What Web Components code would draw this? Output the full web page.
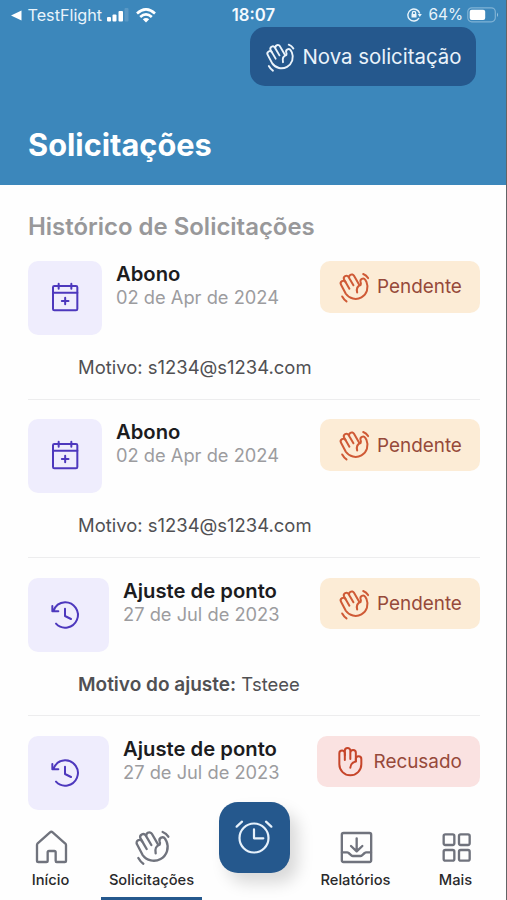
<!DOCTYPE html>
<html lang="pt-BR">
<head>
<meta charset="utf-8">
<title>Solicitações</title>
<style>
html,body{margin:0;height:100%;overflow:hidden;background:#fefefe}
body{font-family:Inter,"Liberation Sans",sans-serif;-webkit-font-smoothing:antialiased}
</style>
</head>
<body>
<app-screen></app-screen>
<script>
const define = (name, css, html) => customElements.define(name, class extends HTMLElement {
  connectedCallback() {
    if (this.shadowRoot) return;
    this.attachShadow({mode: 'open'}).innerHTML = '<style>*{box-sizing:border-box}' + css + '</style>' +
      (typeof html === 'function' ? html(this) : html);
  }
});

/* Line icons: [viewBox, markup]; stroke inherits the text colour. */
const ICONS = {
  wave: ['0 0 132 132', '<path d="M50 72 36.600 49A9 9 0 0 0 21 58L37.500 89.500A41.500 41.500 0 0 0 109.500 49L105 41A9 9 0 0 0 89 49Q91 54 89 59C79 62 74 72 77 85"/><path d="M36.600 49 31.500 40A9 9 0 0 1 47 31L64 60M50 36A9 9 0 0 1 66 27L84 58"/><path d="M98 21Q109 25 115 35M25 99Q31 110 40 116"/>'],
  palm: ['0 0 108 120', '<path d="M38.5 54V34A8.25 8.25 0 0 0 22 34V67A33 33 0 0 0 88 67V51A8.25 8.25 0 0 0 71.5 51V58.5Q56 62 55 77"/><path d="M38.5 40V26A8.25 8.25 0 0 1 55 26V51M55 32A8.25 8.25 0 0 1 71.5 32V58"/>'],
  calendar: ['0 0 90 90', '<rect x="9" y="9" width="73" height="73" rx="4"/><path d="M9 29H82M26 2V17M64 2V17M45.500 44V64M35.500 54H55.500"/>'],
  history: ['0 0 90 90', '<path d="M10 34Q19 8 45 7A38 38 0 1 1 18 71M7 18V34H25M45 26V48L63 57"/>'],
  home: ['0 0 132 132', '<path d="M24 60Q24 57 26 55L63 22Q67 18.500 71 22L108 55Q111 57 111 60V107Q111 111 107 111H83Q80 111 80 107V82Q80 78 76 78H60Q56 78 56 82V107Q56 111 52 111H28Q24 111 24 107Z"/>'],
  inbox: ['0 0 132 132', '<rect x="23.500" y="24" width="88" height="87" rx="5"/><path d="M68 40V78M51 63 68 79 85 63M24 82H39Q42 82 44 84L52 91Q54 93 57 93H79Q82 93 84 91L92 84Q94 82 97 82H111"/>'],
  grid: ['0 0 132 132', '<rect x="29" y="28" width="32" height="32" rx="5"/><rect x="75" y="28" width="32" height="32" rx="5"/><rect x="29" y="75" width="32" height="32" rx="5"/><rect x="75" y="75" width="32" height="32" rx="5"/>'],
  alarm: ['0 0 120 108', '<circle cx="60" cy="57" r="43.500"/><path d="M60 31V58H88M8 23 24 8M96 8 112 23"/>']
};
define('line-icon', ':host{display:block;flex:none}svg{display:block;width:100%;height:100%;overflow:visible;fill:none;stroke:currentColor;stroke-linecap:round;stroke-linejoin:round;stroke-width:var(--sw,5.5)}',
  el => { const [vb, d] = ICONS[el.getAttribute('name')]; return `<svg viewBox="${vb}">${d}</svg>`; });

define('status-bar', `
:host{display:grid;grid-template-columns:1fr auto 1fr;align-items:center;height:27px;padding:3px 8px 0 11px;color:#e9f4fb;font-size:16.2px;line-height:24px}
div{display:flex;align-items:center}
svg{display:block;flex:none}
.r{justify-content:flex-end}
b{font-weight:600;font-size:16.700px;color:#f4faff;margin-right:2px}`, `
<div><svg width="11" height="11" viewBox="0 0 11 11"><path d="M0 5.500 10.500 .5V10.500Z" fill="#fff"/></svg>
<span style="margin:0 5px 0 5.500px">TestFlight</span>
<svg width="22" height="14" viewBox="0 0 22 14" fill="#fff"><rect y="9" width="4" height="4.500" rx="1"/><rect x="5.500" y="6.500" width="4" height="7" rx="1"/><rect x="11.500" y="3" width="4.500" height="10.500" rx="1"/><rect x="17.500" y="0" width="4" height="13.500" rx="1" opacity=".15"/></svg>
<svg style="margin-left:7px" width="20" height="15" viewBox="0 0 20 15" fill="none" stroke="#fff" stroke-width="2.700"><path d="M1 5.400Q10-2.600 19 5.400M4.200 9Q10 3.800 15.800 9"/><path d="M10 14.500 6.800 11.300Q10 8.700 13.200 11.300Z" fill="#fff" stroke="none"/></svg></div>
<b>18:07</b>
<div class="r"><svg width="15" height="14" viewBox="0 0 15 14" fill="none" stroke="#e9f4fb" stroke-width="1.400"><path d="M12.700 5.500A6 6 0 1 0 12 10.200"/><path d="M10.800 6H14.800L12.800 9Z" fill="#e9f4fb" stroke="none"/><path d="M5.400 6V5A1.600 1.600 0 0 1 8.600 5V6"/><rect x="4.500" y="6" width="5" height="3.500" fill="#e9f4fb" stroke="none"/></svg>
<span style="margin:0 4px 0 6px;font-size:15.400px">64%</span>
<svg style="margin-right:-1px" width="32" height="16" viewBox="0 0 32 16"><rect x=".8" y=".8" width="27.500" height="14" rx="4" fill="none" stroke="#9cc5e0" stroke-width="1.200" opacity=".7"/><rect x="2.700" y="2.700" width="15.500" height="10.300" rx="2" fill="#fff"/><path d="M30 5.500Q32 7.800 30 10Z" fill="#9cc5e0"/></svg></div>`);

define('new-request-button', `
:host{display:flex;align-items:center;width:226px;height:59px;padding:0 0 0 12px;border-radius:15px;background:#25588d;color:#eaf3fb;font-size:20.400px;gap:5px}
line-icon{width:36px;height:36px;--sw:7}`, '<line-icon name="wave"></line-icon><slot></slot>');

define('page-header', `
:host{display:flex;flex-direction:column;flex:none;height:184.500px;background:#3c87bb}
new-request-button{align-self:flex-end;margin-right:30.500px}
h1{margin:39px 0 0 28px;font-size:30.750px;font-weight:700;line-height:40px;color:#fff}`, `
<status-bar></status-bar><new-request-button>Nova solicitação</new-request-button><h1><slot></slot></h1>`);

define('status-badge', `
:host{display:flex;align-items:center;height:51.500px;width:159.500px;padding-left:15px;gap:4px;border-radius:10px;background:#fcecd6;color:#96493a;font-size:18.900px}
line-icon{width:38px;height:38px;color:#cf5a36;--sw:7}
:host([kind=refused]){width:163px;height:51px;background:#fae2e1;gap:6px}
:host([kind=refused]) line-icon{width:36px;height:40px;color:#c6452a;--sw:6}`,
  el => `<line-icon name="${el.getAttribute('kind') === 'refused' ? 'palm' : 'wave'}"></line-icon><slot></slot>`);

define('request-row', `
:host{display:block;height:158.450px}
.top{display:flex;align-items:flex-start;height:74px}
.tile{display:grid;place-items:center;width:74px;height:74px;border-radius:10px;background:#efedfd;color:#4d38bd}
.tile line-icon{width:30px;height:30px;--sw:6}
:host([icon=history]) .tile{width:81px;padding-right:7px}
:host([icon=calendar]) .tile{padding-bottom:1px}
.info{flex:1;margin-left:14px}
h3{margin:0;font-size:20.250px;font-weight:600;line-height:25px;color:#1c1c1e}
time{display:block;line-height:22px;font-size:18.300px;color:#9c9c9f}
.why{margin:20px 0 0 50px;line-height:25px;height:25px;font-size:18.450px;color:#505053}
.line{margin-top:18.500px;height:1px;background:#ededee}`,
  el => `<div class="top"><div class="tile"><line-icon name="${el.getAttribute('icon')}"></line-icon></div>
<div class="info"><h3>${el.getAttribute('heading')}</h3><time>${el.getAttribute('date')}</time></div><slot name="status"></slot></div>
<div class="why"><slot></slot></div><div class="line"></div>`);

define('request-list', `
:host{display:block;flex:1;min-height:0;overflow:hidden;padding:26.500px 26.500px 0 28px}
h2{margin:0 0 18px;font-size:23.950px;line-height:32px;font-weight:600;color:#98989a}
b{font-weight:600;font-size:19.050px}`, `
<h2>Histórico de Solicitações</h2>
<request-row icon="calendar" heading="Abono" date="02 de Apr de 2024"><status-badge slot="status">Pendente</status-badge>Motivo: s1234@s1234.com</request-row>
<request-row icon="calendar" heading="Abono" date="02 de Apr de 2024"><status-badge slot="status">Pendente</status-badge>Motivo: s1234@s1234.com</request-row>
<request-row icon="history" heading="Ajuste de ponto" date="27 de Jul de 2023"><status-badge slot="status">Pendente</status-badge><b>Motivo do ajuste:</b> Tsteee</request-row>
<request-row icon="history" heading="Ajuste de ponto" date="27 de Jul de 2023"><status-badge slot="status" kind="refused">Recusado</status-badge></request-row>`);

define('tab-item', `
:host{display:flex;flex-direction:column;align-items:center;height:89px;padding-top:14px;font-size:14.700px;font-weight:450;line-height:20px;color:#29292b}
line-icon{width:44px;height:44px;color:#70737d;--sw:7}
span{margin-top:1px}
i{margin-top:auto;width:101px;height:3px;background:transparent}
:host([active]) i{background:#25588d}`,
  el => `<line-icon name="${el.getAttribute('icon')}"></line-icon><span><slot></slot></span><i></i>`);

define('tab-bar', `
:host{display:grid;grid-template-columns:101px 101px 103px 101px 99px;flex:none;position:relative;height:89px;background:#fefefe}
.fab{position:absolute;left:218.500px;top:-9.500px;width:71.500px;height:71px;border-radius:19px;background:#25588d;color:#e6f1fb;display:grid;place-items:center;padding-bottom:1px;box-shadow:8px 10px 16px rgba(0,0,0,.15)}
.fab line-icon{width:40px;height:36px;--sw:6.600}`, `
<tab-item icon="home">Início</tab-item><tab-item icon="wave" active>Solicitações</tab-item><span></span>
<tab-item icon="inbox">Relatórios</tab-item><tab-item icon="grid">Mais</tab-item>
<div class="fab"><line-icon name="alarm"></line-icon></div>`);

define('app-screen', `
:host{display:flex;flex-direction:column;width:507px;height:900px;background:linear-gradient(#626466,#626466) right/1px 100% no-repeat,#fefefe}
page-header,request-list,tab-bar{margin-right:1px}`, `
<page-header>Solicitações</page-header><request-list></request-list><tab-bar></tab-bar>`);
</script>
</body>
</html>
